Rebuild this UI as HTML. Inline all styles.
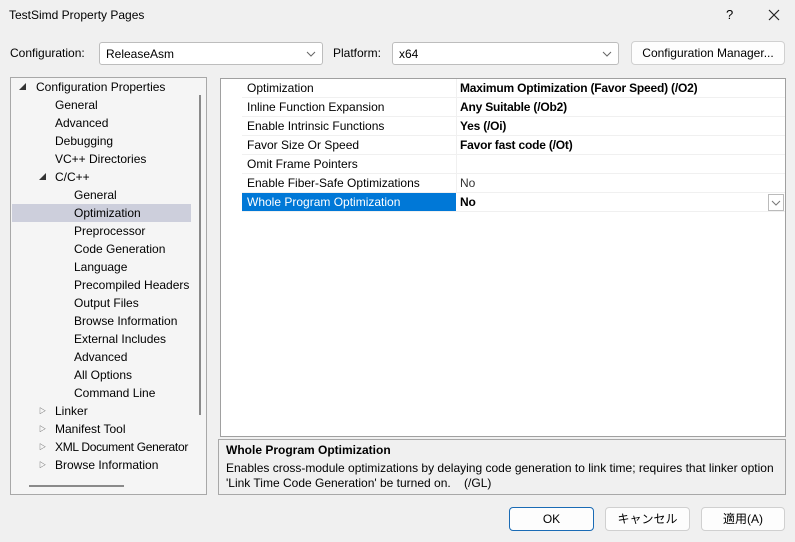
<!DOCTYPE html>
<html><head><meta charset="utf-8"><style>
*{box-sizing:border-box;margin:0;padding:0}
body{width:795px;height:542px;background:#f0f0f0;font-family:"Liberation Sans","Noto Sans CJK JP",sans-serif;font-size:12px;color:#000;position:relative;overflow:hidden}
.a{position:absolute;white-space:nowrap}
.combo{position:absolute;background:#fff;border:1px solid #bdbdbd;border-radius:3px;height:23px;padding:4px 6px;font-size:12px}
.chev{position:absolute;right:6px;top:4px}
.btn{position:absolute;background:#fdfdfd;border:1px solid #d0d0d0;border-radius:4px;height:24px;text-align:center;line-height:22px;font-size:12px}
.tree{position:absolute;left:10px;top:77px;width:197px;height:418px;border:1px solid #a8a8a8;background:#f5f5f5;overflow:hidden}
.tree div{position:absolute;height:18px;line-height:18px;font-size:12px;white-space:nowrap}
.tree .t{font-size:7px;color:#333}
.grid{position:absolute;left:220px;top:78px;width:566px;height:359px;border:1px solid #a0a0a0;background:#fff}
.row{position:absolute;left:21px;width:543px;height:19px;border-bottom:1px solid #f0f0f0;line-height:18px}
.row span{position:absolute;left:5px}
.row b{position:absolute;left:218px;font-weight:bold;letter-spacing:-0.2px}
.row i{position:absolute;left:218px;font-style:normal}
.row .sep{position:absolute;left:214px;top:0;width:1px;height:19px;background:#f0f0f0}
</style></head><body>
<div class="a" style="left:9px;top:8px;font-size:12px">TestSimd Property Pages</div>
<div class="a" style="left:726px;top:7px;font-size:13px">?</div>
<svg class="a" style="left:768px;top:9px" width="12" height="12"><path d="M1 1L11 11M11 1L1 11" stroke="#222" stroke-width="1.2"/></svg>

<div class="a" style="left:10px;top:46px">Configuration:</div>
<div class="combo" style="left:99px;top:42px;width:224px">ReleaseAsm<svg class="chev" width="10" height="12"><path d="M1 5L5 9L9 5" stroke="#666" fill="none"/></svg></div>
<div class="a" style="left:333px;top:46px">Platform:</div>
<div class="combo" style="left:392px;top:42px;width:227px">x64<svg class="chev" width="10" height="12"><path d="M1 5L5 9L9 5" stroke="#666" fill="none"/></svg></div>
<div class="btn" style="left:631px;top:41px;width:154px">Configuration Manager...</div>

<div class="tree">
<div class="t" style="left:8px;top:1px">◢</div><div style="left:25px;top:0px">Configuration Properties</div>
<div style="left:44px;top:18px">General</div>
<div style="left:44px;top:36px">Advanced</div>
<div style="left:44px;top:54px">Debugging</div>
<div style="left:44px;top:72px">VC++ Directories</div>
<div class="t" style="left:28px;top:91px">◢</div><div style="left:44px;top:90px">C/C++</div>
<div style="left:63px;top:108px">General</div>
<div style="left:1px;top:126px;width:179px;background:#cdcfdc"></div>
<div style="left:63px;top:126px">Optimization</div>
<div style="left:63px;top:144px">Preprocessor</div>
<div style="left:63px;top:162px">Code Generation</div>
<div style="left:63px;top:180px">Language</div>
<div style="left:63px;top:198px">Precompiled Headers</div>
<div style="left:63px;top:216px">Output Files</div>
<div style="left:63px;top:234px">Browse Information</div>
<div style="left:63px;top:252px">External Includes</div>
<div style="left:63px;top:270px">Advanced</div>
<div style="left:63px;top:288px">All Options</div>
<div style="left:63px;top:306px">Command Line</div>
<div class="t" style="left:28px;top:325px">▷</div><div style="left:44px;top:324px">Linker</div>
<div class="t" style="left:28px;top:343px">▷</div><div style="left:44px;top:342px">Manifest Tool</div>
<div class="t" style="left:28px;top:361px">▷</div><div style="left:44px;top:360px;letter-spacing:-0.3px">XML Document Generator</div>
<div class="t" style="left:28px;top:379px">▷</div><div style="left:44px;top:378px">Browse Information</div>
<div style="left:180px;top:0;width:15px;height:416px;background:#f5f5f5"></div>
<div style="left:188px;top:17px;width:2px;height:320px;background:#8a8a8a"></div>
<div style="left:18px;top:407px;width:95px;height:2px;background:#8a8a8a"></div>
</div>

<div class="grid">
<div class="row" style="top:0"><span>Optimization</span><div class="sep"></div><b>Maximum Optimization (Favor Speed) (/O2)</b></div>
<div class="row" style="top:19px"><span>Inline Function Expansion</span><div class="sep"></div><b>Any Suitable (/Ob2)</b></div>
<div class="row" style="top:38px"><span>Enable Intrinsic Functions</span><div class="sep"></div><b>Yes (/Oi)</b></div>
<div class="row" style="top:57px"><span>Favor Size Or Speed</span><div class="sep"></div><b>Favor fast code (/Ot)</b></div>
<div class="row" style="top:76px"><span>Omit Frame Pointers</span><div class="sep"></div></div>
<div class="row" style="top:95px"><span>Enable Fiber-Safe Optimizations</span><div class="sep"></div><i style="color:#333">No</i></div>
<div class="row" style="top:114px"><div style="position:absolute;left:0;top:0;width:214px;height:18px;background:#0078d7"></div><span style="color:#fff">Whole Program Optimization</span><b>No</b>
<div style="position:absolute;left:526px;top:1px;width:16px;height:17px;border:1px solid #bbb;background:#fff"><svg width="14" height="15"><path d="M3 6L7 10L11 6" stroke="#777" fill="none"/></svg></div></div>
</div>

<div class="a" style="left:218px;top:439px;width:568px;height:56px;border:1px solid #a8a8a8;background:#f0f0f0"></div>
<div class="a" style="left:226px;top:443px;font-weight:bold">Whole Program Optimization</div>
<div class="a" style="left:226px;top:461px">Enables cross-module optimizations by delaying code generation to link time; requires that linker option</div>
<div class="a" style="left:226px;top:476px">'Link Time Code Generation' be turned on.&nbsp;&nbsp;&nbsp;&nbsp;(/GL)</div>

<div class="btn" style="left:509px;top:507px;width:85px;border-color:#1a6bb5;background:#fdfdfd">OK</div>
<div class="btn" style="left:605px;top:507px;width:85px">キャンセル</div>
<div class="btn" style="left:701px;top:507px;width:84px">適用(A)</div>
</body></html>
